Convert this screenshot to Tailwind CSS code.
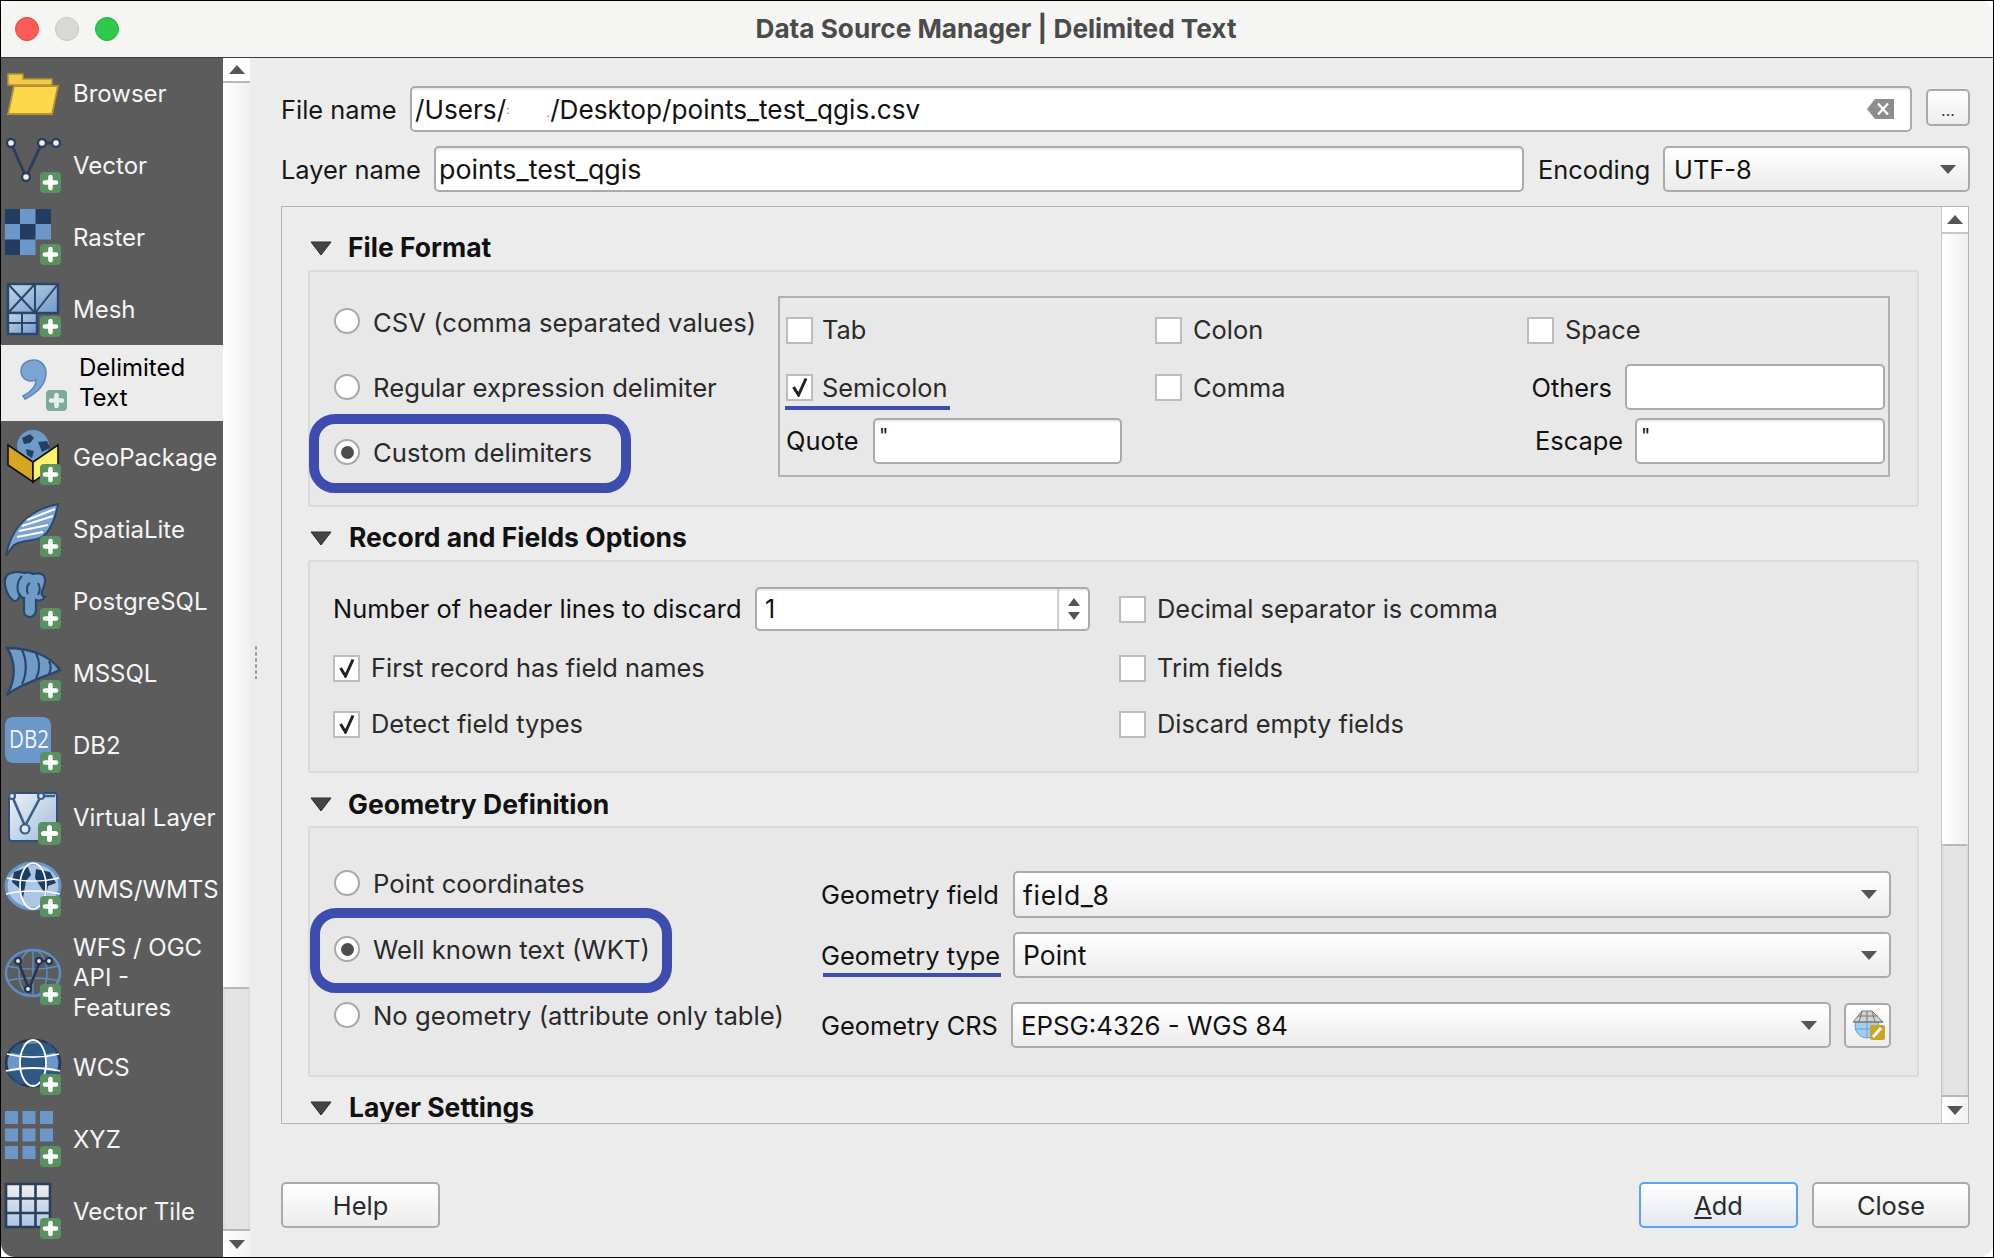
<!DOCTYPE html>
<html lang="en">
<head>
<meta charset="UTF-8">
<title>Data Source Manager | Delimited Text</title>
<script src="https://cdn.jsdelivr.net/npm/@tailwindcss/browser@4"></script>
</head>
<body class="[font-family:Inter,sans-serif] antialiased bg-white">

<svg class="absolute w-0 h-0 overflow-hidden">
  <defs>
    <symbol id="plus" viewBox="0 0 21 21">
      <rect width="21" height="21" rx="4" fill="#5b9160"/>
      <path d="M10.5 5v11M5 10.5h11" stroke="#fff" stroke-width="4.6" stroke-linecap="round"/>
    </symbol>
    <symbol id="plus-light" viewBox="0 0 21 21">
      <rect width="21" height="21" rx="4" fill="#7dab97"/>
      <path d="M10.5 5v11M5 10.5h11" stroke="#e4eef0" stroke-width="4.6" stroke-linecap="round"/>
    </symbol>
    <symbol id="arrow-down" viewBox="0 0 16 9"><path d="M0 0h16L8 9z" fill="#555"/></symbol>
    <symbol id="arrow-up" viewBox="0 0 16 9"><path d="M8 0l8 9H0z" fill="#555"/></symbol>
    <symbol id="section" viewBox="0 0 22 15"><path d="M1 1h20L11 14z" fill="#444" stroke="#2c2c2c"/></symbol>
    <symbol id="tick" viewBox="0 0 20 20"><path d="M3.5 10l5 8L16 1.500" fill="none" stroke="#222" stroke-width="3"/></symbol>
    <linearGradient id="mesh-a" x1="0" y1="0" x2="1" y2="1"><stop offset="0" stop-color="#c4d6ea"/><stop offset="1" stop-color="#6e9aca"/></linearGradient>
    <linearGradient id="virt" x1="0" y1="0" x2="1" y2="1"><stop offset="0" stop-color="#eef2f7"/><stop offset="1" stop-color="#9fbcdc"/></linearGradient>
    <linearGradient id="tile" x1="0" y1="0" x2="0" y2="1"><stop offset="0" stop-color="#f0f0f0"/><stop offset="1" stop-color="#a9c5e6"/></linearGradient>
  </defs>
</svg>

<div class="w-[1994px] h-[1258px] border border-black overflow-hidden">
<div class="h-full flex flex-col rounded-[14px] overflow-hidden bg-[#ececec]">

  <!-- title bar -->
  <div class="h-[57px] shrink-0 flex items-center relative bg-[#f5f5f4] border-b border-[#3c3c3c]">
    <div class="absolute left-[14px] top-[16px] flex gap-[16px]">
      <span class="w-6 h-6 rounded-full bg-[#fd5b56] border border-[#e5443f]"></span>
      <span class="w-6 h-6 rounded-full bg-[#d9dad8] border border-[#c4c5c3]"></span>
      <span class="w-6 h-6 rounded-full bg-[#2fc94e] border border-[#25b03f]"></span>
    </div>
    <div class="w-full text-center text-[26.2px] font-bold text-[#4b4b4b] pr-[2px]">Data Source Manager | Delimited Text</div>
  </div>

  <div class="flex-1 flex min-h-0">
    <!-- sidebar -->
    <div class="w-[222px] shrink-0 bg-[#5c5c5c] text-[#f5f5f5] text-[24px] leading-[30px] flex flex-col">
      <div class="h-[71px] flex items-center gap-2">
        <svg class="w-16 h-16 shrink-0" viewBox="1 0 64 64">
          <path d="M8 12h15v5h29v6H8z" fill="#f3cb49" stroke="#b3952f" stroke-width="1.5"/>
          <path d="M14 24h44l-6 28H8z" fill="#fdd84d" stroke="#b3952f" stroke-width="1.8"/>
        </svg>
        <span>Browser</span>
      </div>
      <div class="h-[72px] flex items-center gap-2">
        <svg class="w-16 h-16 shrink-0" viewBox="1 0 64 64">
          <path d="M11 10l15 34L42 10h14" fill="none" stroke="#2b3f5c" stroke-width="3"/>
          <g fill="#eee" stroke="#2b3f5c" stroke-width="2.4"><circle cx="11" cy="10" r="4"/><circle cx="42" cy="10" r="4"/><circle cx="56" cy="10" r="4"/><circle cx="26" cy="44" r="4"/></g>
          <use href="#plus" x="40" y="39" width="21" height="21"/>
        </svg>
        <span class="pt-[2px]">Vector</span>
      </div>
      <div class="h-[72px] flex items-center gap-2">
        <svg class="w-16 h-16 shrink-0" viewBox="1 0 64 64">
          <rect x="5" y="4" width="46" height="46" fill="#6b97c9"/>
          <path d="M5 4h15v15H5zM35.500 4h15.500v15H35.500zM20 19h15.500v15.500H20zM5 34.500h15V50H5z" fill="#233d60"/>
          <rect x="35.500" y="34.500" width="15.500" height="15.500" fill="#5c5c5c"/>
          <use href="#plus" x="40" y="39" width="21" height="21"/>
        </svg>
        <span class="pt-[2px]">Raster</span>
      </div>
      <div class="h-[72px] flex items-center gap-2">
        <svg class="w-16 h-16 shrink-0" viewBox="1 0 64 64">
          <rect x="8" y="7" width="50" height="29" fill="url(#mesh-a)" stroke="#2b4668" stroke-width="2.4"/>
          <rect x="8" y="36" width="29" height="21" fill="url(#mesh-a)" stroke="#2b4668" stroke-width="2.4"/>
          <path d="M8 7l27 29M35 7L8 36M35 7v29M58 7L35 36M8 46h29M22 36v21" fill="none" stroke="#2b4668" stroke-width="2"/>
          <use href="#plus" x="40" y="39" width="21" height="21"/>
        </svg>
        <span class="pt-[2px]">Mesh</span>
      </div>
      <div class="h-[76px] flex items-center gap-2 bg-[#ececec] text-black">
        <svg class="w-16 h-16 shrink-0 ml-[6px]" viewBox="1 0 64 64">
          <path d="M15 20C15 13 21 9 28 9c7 0 12 6 12 13 0 11-9 20-21 26l-2-3c8-4 13-10 13-16-7 3-15-1-15-9z" fill="#7ba4d3" stroke="#5d87b8" stroke-width="1.5"/>
          <use href="#plus-light" x="40" y="39" width="21" height="21"/>
        </svg>
        <span>Delimited<br>Text</span>
      </div>
      <div class="h-[72px] flex items-center gap-2">
        <svg class="w-16 h-16 shrink-0" viewBox="1 0 64 64">
          <circle cx="33" cy="21" r="16" fill="#6f9bc8"/>
          <path d="M22 13l8-4 4 4-4 5-6 1zM38 17l9-1 3 7-8 4zM26 24l8 2-2 7-5-3z" fill="#22405f"/>
          <path d="M8 20l25 17v20L8 40z" fill="#d5a71f" stroke="#111" stroke-width="1.6"/>
          <path d="M58 20L33 37v20l25-17z" fill="#fdf16b" stroke="#111" stroke-width="1.6"/>
          <use href="#plus" x="40" y="39" width="21" height="21"/>
        </svg>
        <span class="pt-[2px]">GeoPackage</span>
      </div>
      <div class="h-[72px] flex items-center gap-2">
        <svg class="w-16 h-16 shrink-0" viewBox="1 0 64 64">
          <path d="M6 59C10 36 24 14 58 7c-2 12-8 30-18 34-8 3-18 2-26 7-3 3-5 7-8 11z" fill="#7ba4d3" stroke="#2b4668" stroke-width="1.8"/>
          <path d="M22 29l31-10M19 34l29-6M17 40l26-5M27 23l28-11" stroke="#fff" stroke-width="2"/>
          <use href="#plus" x="40" y="39" width="21" height="21"/>
        </svg>
        <span class="pt-[2px]">SpatiaLite</span>
      </div>
      <div class="h-[72px] flex items-center gap-2">
        <svg class="w-16 h-16 shrink-0" viewBox="1 0 64 64">
          <path d="M12 4c-5 0-8 5-7 12 1 7 5 15 10 16 3 0 4-3 5-6 1 2 3 3 4 3v13c0 4 3 6 6 6s6-3 6-7v-10c3 1 7 0 9-3-3-1-4-2-3-6 3-6 4-12 2-15-2-3-7-3-11-2-3-2-6-2-9-1-4-1-8-2-12 0z" fill="#6f9bc8" stroke="#2b4668" stroke-width="2.2"/>
          <path d="M22 7c-5 5-6 14-2 20M30 14c-3 1-4 7-2 11M38 14c2 3 2 8 0 12" fill="none" stroke="#2b4668" stroke-width="2"/>
          <use href="#plus" x="40" y="39" width="21" height="21"/>
        </svg>
        <span class="pt-[2px]">PostgreSQL</span>
      </div>
      <div class="h-[72px] flex items-center gap-2">
        <svg class="w-16 h-16 shrink-0" viewBox="1 0 64 64">
          <path d="M7 7c20 0 42 6 53 22C48 35 22 42 7 54c9-16 9-33 0-47z" fill="#6f9bc8" stroke="#2b4668" stroke-width="2.4"/>
          <path d="M22 9c5 10 5 24 0 34M36 12c4 8 4 18 0 26M49 20c2 4 2 9 0 13" fill="none" stroke="#2b4668" stroke-width="2.2"/>
          <use href="#plus" x="40" y="39" width="21" height="21"/>
        </svg>
        <span class="pt-[2px]">MSSQL</span>
      </div>
      <div class="h-[72px] flex items-center gap-2">
        <svg class="w-16 h-16 shrink-0" viewBox="1 0 64 64">
          <rect x="5" y="4" width="46" height="46" rx="8" fill="#6b97c9"/>
          <text x="9" y="35" fill="#f2f5f9" font-size="25" font-family="Open Sans, sans-serif" textLength="40" lengthAdjust="spacingAndGlyphs">DB2</text>
          <use href="#plus" x="40" y="39" width="21" height="21"/>
        </svg>
        <span class="pt-[2px]">DB2</span>
      </div>
      <div class="h-[72px] flex items-center gap-2">
        <svg class="w-16 h-16 shrink-0" viewBox="1 0 64 64">
          <rect x="9" y="8" width="48" height="48" rx="3" fill="url(#virt)" stroke="#2f5277" stroke-width="2"/>
          <path d="M12 11l13 30L41 11h14" fill="none" stroke="#3a6088" stroke-width="2.6"/>
          <g fill="#dfe7f0" stroke="#3a6088" stroke-width="2.2"><circle cx="12" cy="11" r="3"/><circle cx="41" cy="11" r="3"/><circle cx="25" cy="44" r="4.5"/></g>
          <use href="#plus" x="38" y="37" width="23" height="23"/>
        </svg>
        <span class="pt-[2px]">Virtual Layer</span>
      </div>
      <div class="h-[72px] flex items-center gap-2">
        <svg class="w-16 h-16 shrink-0" viewBox="1 0 64 64">
          <ellipse cx="33" cy="29" rx="27" ry="23" fill="#abc7e6" stroke="#6a96c8" stroke-width="3"/>
          <path d="M14 15l14-5 3 8-5 6-3 17-4-10-7-6zM36 12l14 3 6 11-8 3-2 9-6-9-5-8z" fill="#1f3d60"/>
          <path d="M7 21c16 4 36 4 52 0M6 37c16-4 38-4 54 0" fill="none" stroke="#fff" stroke-width="1.6"/>
          <ellipse cx="33" cy="29" rx="13" ry="23" fill="none" stroke="#fff" stroke-width="1.6"/>
          <use href="#plus" x="40" y="39" width="21" height="21"/>
        </svg>
        <span class="pt-[2px]">WMS/WMTS</span>
      </div>
      <div class="h-[106px] flex items-center gap-2">
        <svg class="w-16 h-16 shrink-0" viewBox="1 0 64 64">
          <ellipse cx="33" cy="27" rx="27" ry="23" fill="none" stroke="#5c8fc8" stroke-width="2.4"/>
          <path d="M7 20c16 4 36 4 52 0M6 35c16-4 38-4 54 0M33 4v46" fill="none" stroke="#5c8fc8" stroke-width="1.4"/>
          <ellipse cx="33" cy="27" rx="14" ry="23" fill="none" stroke="#5c8fc8" stroke-width="1.4"/>
          <path d="M18 15l11 28 11-28h13" fill="none" stroke="#23364f" stroke-width="2.6"/>
          <g fill="#dfe7f0" stroke="#23364f" stroke-width="2.2"><circle cx="18" cy="15" r="3"/><circle cx="39" cy="15" r="3"/><circle cx="49" cy="15" r="3"/><circle cx="28" cy="43" r="3"/></g>
          <use href="#plus" x="40" y="38" width="21" height="21"/>
        </svg>
        <span>WFS / OGC<br>API -<br>Features</span>
      </div>
      <div class="h-[72px] flex items-center gap-2">
        <svg class="w-16 h-16 shrink-0" viewBox="1 0 64 64">
          <ellipse cx="33" cy="28" rx="27" ry="23" fill="#6a96c8" stroke="#2a3c55" stroke-width="3"/>
          <path d="M9 17c14 4 34 4 48 0l-8-9-32 1zM7 37c16-3 36-3 52 0l-12 12H17zM20 20h26v16H20z" fill="#2c5480" opacity="0.95"/>
          <path d="M7 19c16 4 36 4 52 0M6 36c16-4 38-4 54 0" fill="none" stroke="#fff" stroke-width="1.8"/>
          <ellipse cx="33" cy="28" rx="13" ry="23" fill="none" stroke="#fff" stroke-width="1.8"/>
          <use href="#plus" x="40" y="39" width="21" height="21"/>
        </svg>
        <span class="pt-[2px]">WCS</span>
      </div>
      <div class="h-[72px] flex items-center gap-2">
        <svg class="w-16 h-16 shrink-0" viewBox="1 0 64 64">
          <g fill="#6b97c9">
            <rect x="5" y="4" width="13" height="13"/><rect x="22.5" y="4" width="13" height="13"/><rect x="40" y="4" width="13" height="13"/>
            <rect x="5" y="21.5" width="13" height="13"/><rect x="22.5" y="21.5" width="13" height="13"/><rect x="40" y="21.5" width="13" height="13"/>
            <rect x="5" y="39" width="13" height="13"/><rect x="22.5" y="39" width="13" height="13"/>
          </g>
          <use href="#plus" x="40" y="39" width="21" height="21"/>
        </svg>
        <span class="pt-[2px]">XYZ</span>
      </div>
      <div class="h-[72px] flex items-center gap-2">
        <svg class="w-16 h-16 shrink-0" viewBox="1 0 64 64">
          <rect x="6" y="5" width="44" height="43" fill="url(#tile)"/>
          <path d="M6 5h44v43H6zM20.500 5v43M35.500 5v43M6 19.500h44M6 34h44" fill="none" stroke="#2b3f58" stroke-width="2.6"/>
          <use href="#plus" x="40" y="39" width="21" height="21"/>
        </svg>
        <span class="pt-[2px]">Vector Tile</span>
      </div>
    </div>

    <!-- sidebar scrollbar -->
    <div class="w-[27px] shrink-0 flex flex-col">
      <div class="h-[25px] bg-white border-b-2 border-[#b8b8b8] flex items-center justify-center">
        <svg class="w-4 h-[9px]"><use href="#arrow-up"/></svg>
      </div>
      <div class="h-[904px] bg-gradient-to-r from-white to-[#f0f0f0]"></div>
      <div class="flex-1 bg-[#e4e4e4] border-x-2 border-[#dcdcdc] border-t-2 border-t-[#b8b8b8]"></div>
      <div class="h-[28px] bg-gradient-to-r from-white to-[#f2f2f2] border-t-2 border-[#b8b8b8] flex items-center justify-center">
        <svg class="w-4 h-[9px]"><use href="#arrow-down"/></svg>
      </div>
    </div>

    <!-- main -->
    <div class="flex-1 min-w-0 pt-[28px] pl-[31px] pr-[23px] relative text-[25.4px] text-[#161616]">
      <div class="absolute left-[4px] top-[587px] w-[4px] h-[34px] bg-[radial-gradient(#9a9a9a_1px,transparent_1.5px)] bg-[length:4px_6px]"></div>

      <div class="flex items-center h-[46px]">
        <span class="w-[129px] shrink-0 pt-[2px]">File name</span>
        <div class="flex-1 h-[46px] flex items-center pl-[3px] pr-[16px] bg-white border-2 border-[#aaaaaa] rounded-[5px] shadow-[inset_0_2px_0_#ededed] text-[26.2px] text-[#111]">
          <span class="pt-[2px]">/Users/</span><span class="w-[6px] text-[12px] text-[#888] pt-[2px]">:</span><span class="w-[34px]"></span><span class="w-[4px] text-[12px] text-[#888] pt-[8px]">.</span><span class="pt-[2px]">/Desktop/points_test_qgis.csv</span>
          <svg class="ml-auto w-[27px] h-[20px]" viewBox="0 0 27 20"><path d="M0 10L8 0h19v20H8z" fill="#8d8d8d"/><path d="M11 4.500l10 11M21 4.500l-10 11" stroke="#fff" stroke-width="2.4"/></svg>
        </div>
        <div class="ml-[14px] w-[44px] h-[37px] bg-gradient-to-b from-white to-[#ededed] border-2 border-[#aaaaaa] rounded-[5px] flex items-center justify-center text-[16px] text-[#333] -mt-[3px] pt-[4px]">...</div>
      </div>

      <div class="flex items-center h-[46px] mt-[14px]">
        <span class="w-[153px] shrink-0 pt-[2px]">Layer name</span>
        <div class="w-[1090px] h-[46px] flex items-center pl-[3px] bg-white border-2 border-[#aaaaaa] rounded-[5px] shadow-[inset_0_2px_0_#ededed] text-[26.8px] text-[#111]"><span>points_test_qgis</span></div>
        <span class="ml-[14px] w-[125px] shrink-0 pt-[2px]">Encoding</span>
        <div class="flex-1 h-[46px] flex items-center justify-between pl-[9px] pr-[12px] bg-gradient-to-b from-white to-[#ececec] border-2 border-[#aaaaaa] rounded-[5px] text-[25.4px] text-[#111]">
          <span class="pt-[2px]">UTF-8</span><svg class="w-4 h-[9px]"><use href="#arrow-down"/></svg>
        </div>
      </div>

      <!-- scroll frame -->
      <div class="mt-[14px] h-[918px] mr-px flex border border-[#b4b4b4] overflow-hidden">
        <div class="flex-1 min-w-0 pt-[19px] pl-[26px] pr-[22px] text-[#2a2a2a]">

          <div class="h-[44px] flex items-center gap-[16px] ml-[2px] font-bold text-[26.5px] text-[#111]"><svg class="w-[22px] h-[15px]"><use href="#section"/></svg><span>File Format</span></div>
          <div class="h-[237px] flex bg-[#e8e8e8] border-2 border-[#dadada] rounded-[3px]">
            <div class="w-[468px] shrink-0 pt-[16px] pl-[24px] text-[25.7px]">
              <div class="h-[66px] flex items-center gap-[13px]"><span class="w-[26px] h-[26px] rounded-full bg-white border-2 border-[#a8a8a8]"></span><span class="pt-[5px]">CSV (comma separated values)</span></div>
              <div class="h-[66px] flex items-center gap-[13px]"><span class="w-[26px] h-[26px] rounded-full bg-white border-2 border-[#a8a8a8]"></span><span class="pt-[3px]">Regular expression delimiter</span></div>
              <div class="h-[64px] flex items-center gap-[13px] relative">
                <span class="w-[26px] h-[26px] rounded-full bg-white border-2 border-[#a8a8a8] flex items-center justify-center"><span class="w-[13px] h-[13px] rounded-full bg-[#4d4d4d]"></span></span><span class="pt-[2px]">Custom delimiters</span>
                <span class="absolute -left-[25px] -top-[6px] w-[322px] h-[79px] border-[10px] border-[#3c4caf] rounded-[26px]"></span>
              </div>
            </div>
            <div class="mt-[24px] h-[181px] flex-1 mr-[27px] border-2 border-[#b0b0b0] pt-[3px] pl-[6px] pr-[3px] grid grid-cols-[369px_372px_1fr] grid-rows-[58px_56px_52px] text-[#2a2a2a]">
              <div class="flex items-center gap-[9px]"><span class="w-[27px] h-[27px] bg-white border-2 border-[#bcbcbc]"></span><span class="pt-[1px]">Tab</span></div>
              <div class="flex items-center gap-[11px]"><span class="w-[27px] h-[27px] bg-white border-2 border-[#bcbcbc]"></span><span class="pt-[1px]">Colon</span></div>
              <div class="flex items-center gap-[11px]"><span class="w-[27px] h-[27px] bg-white border-2 border-[#bcbcbc]"></span><span class="pt-[1px]">Space</span></div>
              <div class="flex items-center gap-[9px] relative"><span class="w-[27px] h-[27px] bg-white border-2 border-[#bcbcbc] flex items-center justify-center"><svg class="w-5 h-5"><use href="#tick"/></svg></span><span class="pt-[2px]">Semicolon</span><span class="absolute -left-px top-[47px] w-[165px] h-[4px] bg-[#3c4caf]"></span></div>
              <div class="flex items-center gap-[11px]"><span class="w-[27px] h-[27px] bg-white border-2 border-[#bcbcbc]"></span><span class="pt-[2px]">Comma</span></div>
              <div class="flex items-center justify-end gap-[13px] text-[#111]"><span class="pt-[2px]">Others</span><span class="w-[260px] h-[46px] bg-white border-2 border-[#aaaaaa] rounded-[5px]"></span></div>
              <div class="flex items-center gap-[14px] text-[#111]"><span class="w-[73px] pt-[1px]">Quote</span><span class="w-[249px] h-[46px] pl-[4px] pt-[1px] bg-white border-2 border-[#aaaaaa] rounded-[5px] shadow-[inset_0_2px_0_#ededed] text-[20px]">"</span></div>
              <div></div>
              <div class="flex items-center justify-end gap-[12px] text-[#111]"><span class="pt-[1px]">Escape</span><span class="w-[250px] h-[46px] pl-[4px] pt-[1px] bg-white border-2 border-[#aaaaaa] rounded-[5px] shadow-[inset_0_2px_0_#ededed] text-[20px]">"</span></div>
            </div>
          </div>

          <div class="mt-[9px] h-[44px] flex items-center gap-[17px] ml-[2px] font-bold text-[26.5px] text-[#111]"><svg class="w-[22px] h-[15px]"><use href="#section"/></svg><span>Record and Fields Options</span></div>
          <div class="h-[213px] bg-[#e8e8e8] border-2 border-[#dadada] rounded-[3px] pt-[25px] pl-[23px] grid grid-cols-[786px_1fr] grid-rows-[44px_74px_38px]">
            <div class="flex items-center text-[#111]">
              <span class="w-[422px] shrink-0 pt-[1px]">Number of header lines to discard</span>
              <div class="w-[335px] h-[44px] flex bg-white border-2 border-[#aaaaaa] rounded-[5px] shadow-[inset_0_2px_0_#ededed]">
                <span class="flex-1 pl-[8px] leading-[40px] text-[25px]">1</span>
                <span class="w-[31px] border-l-2 border-[#cfcfcf] flex flex-col items-center justify-center gap-[6px]"><svg class="w-3 h-[8px]" viewBox="0 0 16 9" preserveAspectRatio="none"><path d="M8 0l8 9H0z" fill="#555"/></svg><svg class="w-3 h-[8px]" viewBox="0 0 16 9" preserveAspectRatio="none"><path d="M0 0h16L8 9z" fill="#555"/></svg></span>
              </div>
            </div>
            <div class="flex items-center gap-[11px]"><span class="w-[27px] h-[27px] bg-white border-2 border-[#bcbcbc]"></span><span class="pt-[1px]">Decimal separator is comma</span></div>
            <div class="flex items-center gap-[11px]"><span class="w-[27px] h-[27px] bg-white border-2 border-[#bcbcbc] flex items-center justify-center"><svg class="w-5 h-5"><use href="#tick"/></svg></span><span class="pt-[1px]">First record has field names</span></div>
            <div class="flex items-center gap-[11px]"><span class="w-[27px] h-[27px] bg-white border-2 border-[#bcbcbc]"></span><span class="pt-[1px]">Trim fields</span></div>
            <div class="flex items-center gap-[11px]"><span class="w-[27px] h-[27px] bg-white border-2 border-[#bcbcbc] flex items-center justify-center"><svg class="w-5 h-5"><use href="#tick"/></svg></span><span class="pt-[1px]">Detect field types</span></div>
            <div class="flex items-center gap-[11px]"><span class="w-[27px] h-[27px] bg-white border-2 border-[#bcbcbc]"></span><span class="pt-[1px]">Discard empty fields</span></div>
          </div>

          <div class="mt-[10px] h-[43px] flex items-center gap-[16px] ml-[2px] font-bold text-[26.5px] text-[#111]"><svg class="w-[22px] h-[15px]"><use href="#section"/></svg><span>Geometry Definition</span></div>
          <div class="h-[251px] flex bg-[#e8e8e8] border-2 border-[#dadada] rounded-[3px]">
            <div class="w-[511px] shrink-0 pt-[22px] pl-[24px] text-[25.7px]">
              <div class="h-[66px] flex items-center gap-[13px]"><span class="w-[26px] h-[26px] rounded-full bg-white border-2 border-[#a8a8a8]"></span><span class="pt-[2px]">Point coordinates</span></div>
              <div class="h-[66px] flex items-center gap-[13px] relative">
                <span class="w-[26px] h-[26px] rounded-full bg-white border-2 border-[#a8a8a8] flex items-center justify-center"><span class="w-[13px] h-[13px] rounded-full bg-[#4d4d4d]"></span></span><span class="pt-[2px]">Well known text (WKT)</span>
                <span class="absolute -left-[24px] -top-[8px] w-[362px] h-[85px] border-[10px] border-[#3c4caf] rounded-[26px]"></span>
              </div>
              <div class="h-[66px] flex items-center gap-[13px]"><span class="w-[26px] h-[26px] rounded-full bg-white border-2 border-[#a8a8a8]"></span><span class="pt-[2px]">No geometry (attribute only table)</span></div>
            </div>
            <div class="flex-1 pt-[43px] pr-[26px] text-[#111]">
              <div class="h-[47px] flex items-center">
                <span class="w-[192px] shrink-0 pt-[2px]">Geometry field</span>
                <div class="flex-1 h-full flex items-center justify-between pl-[8px] pr-[12px] bg-gradient-to-b from-white to-[#ececec] border-2 border-[#aaaaaa] rounded-[5px] text-[26.5px]"><span class="pt-[2px] tracking-[0.7px]">field_8</span><svg class="w-4 h-[9px]"><use href="#arrow-down"/></svg></div>
              </div>
              <div class="h-[46px] mt-[14px] flex items-center relative">
                <span class="w-[192px] shrink-0 pt-[2px]">Geometry type</span>
                <span class="absolute left-[2px] top-[41px] w-[178px] h-[4px] bg-[#3c4caf]"></span>
                <div class="flex-1 h-full flex items-center justify-between pl-[8px] pr-[12px] bg-gradient-to-b from-white to-[#ececec] border-2 border-[#aaaaaa] rounded-[5px] text-[26.5px]"><span class="pt-[2px]">Point</span><svg class="w-4 h-[9px]"><use href="#arrow-down"/></svg></div>
              </div>
              <div class="h-[46px] mt-[24px] flex items-center">
                <span class="w-[190px] shrink-0 pt-[2px]">Geometry CRS</span>
                <div class="flex-1 h-full flex items-center justify-between pl-[8px] pr-[12px] bg-gradient-to-b from-white to-[#ececec] border-2 border-[#aaaaaa] rounded-[5px] text-[25.8px]"><span class="pt-[2px]">EPSG:4326 - WGS 84</span><svg class="w-4 h-[9px]"><use href="#arrow-down"/></svg></div>
                <div class="ml-[13px] w-[47px] h-[45px] flex items-center justify-center bg-gradient-to-b from-white to-[#ececec] border-2 border-[#aaaaaa] rounded-[5px]">
                  <svg class="w-[34px] h-[32px]" viewBox="0 0 34 32">
                    <circle cx="16" cy="17" r="12" fill="#a5cdf0" stroke="#6d9fd0"/>
                    <path d="M2 13L11 2h10l11 11z" fill="#d2d2d2" stroke="#777"/>
                    <path d="M2 13h30M7 7h20M11 2L8 13M21 2l3 11M16 2v11" fill="none" stroke="#777"/>
                    <path d="M4 20h24M16 13v16" stroke="#6d9fd0"/>
                    <rect x="19" y="16" width="15" height="15" rx="2" fill="#c9a520"/>
                    <path d="M22 28l8-9" stroke="#fff" stroke-width="3"/>
                  </svg>
                </div>
              </div>
            </div>
          </div>

          <div class="mt-[9px] h-[44px] flex items-center gap-[17px] ml-[2px] font-bold text-[26.5px] text-[#111]"><svg class="w-[22px] h-[15px]"><use href="#section"/></svg><span>Layer Settings</span></div>
        </div>

        <!-- frame scrollbar -->
        <div class="w-[27px] shrink-0 flex flex-col border-l border-[#c4c4c4]">
          <div class="h-[27px] bg-white border-b-2 border-[#c8c8c8] flex items-center justify-center"><svg class="w-4 h-[9px]"><use href="#arrow-up"/></svg></div>
          <div class="h-[610px] bg-gradient-to-r from-white to-[#f0f0f0]"></div>
          <div class="flex-1 bg-[#e4e4e4] border-x-2 border-[#dcdcdc] border-t-2 border-t-[#b8b8b8]"></div>
          <div class="h-[28px] bg-gradient-to-r from-white to-[#f2f2f2] border-t-2 border-[#b8b8b8] flex items-center justify-center"><svg class="w-4 h-[9px]"><use href="#arrow-down"/></svg></div>
        </div>
      </div>

      <div class="mt-[58px] flex items-center gap-[14px] text-[#2a2a2a]">
        <div class="w-[159px] h-[46px] mr-auto flex items-center justify-center bg-gradient-to-b from-white to-[#ececec] border-2 border-[#aaaaaa] rounded-[5px]"><span class="pt-[2px]">Help</span></div>
        <div class="w-[159px] h-[46px] flex items-center justify-center bg-gradient-to-b from-white to-[#e3e8f0] border-2 border-[#5ba2ef] rounded-[5px]"><span class="pt-[2px]"><u>A</u>dd</span></div>
        <div class="w-[158px] h-[46px] flex items-center justify-center bg-gradient-to-b from-white to-[#ececec] border-2 border-[#aaaaaa] rounded-[5px]"><span class="pt-[2px]">Close</span></div>
      </div>
    </div>
  </div>

</div>
</div>
</body>
</html>
